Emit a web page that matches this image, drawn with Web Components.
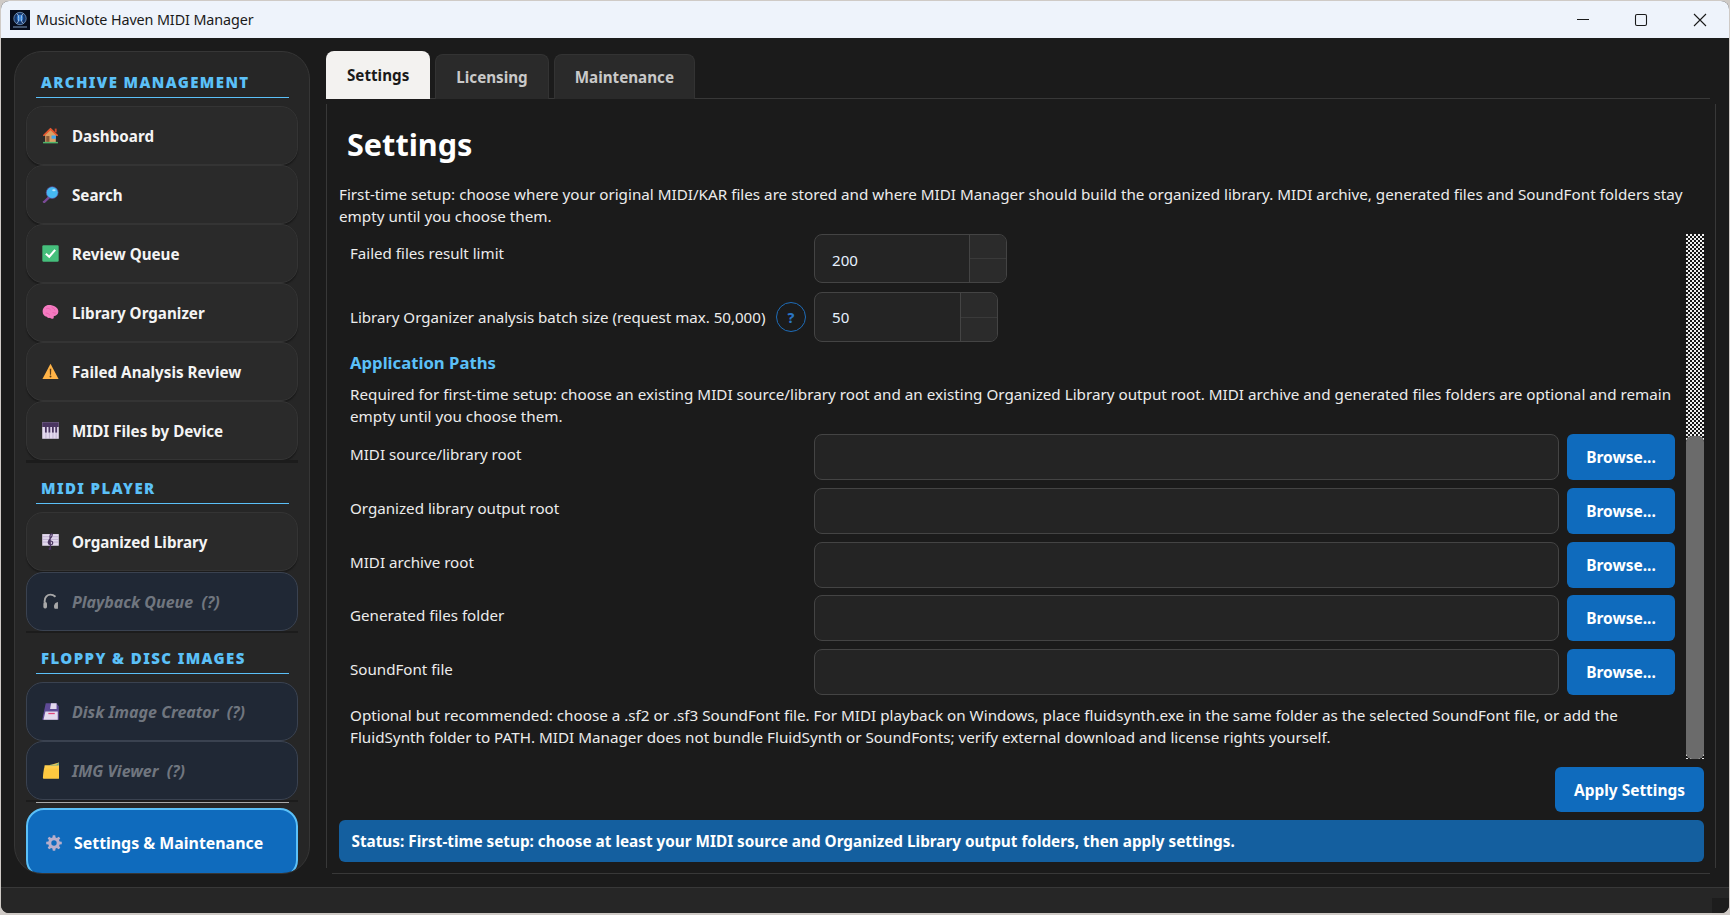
<!DOCTYPE html>
<html lang="en"><head><meta charset="utf-8"><title>MusicNote Haven MIDI Manager</title>
<style>
html,body{margin:0;height:100%;background:#cfcac6;overflow:hidden}
body{font-family:"Noto Sans","Open Sans",sans-serif;font-size:15px;color:#f0f0f0}
</style></head><body>
<app-window>
  <title-bar slot="top">MusicNote Haven MIDI Manager</title-bar>
  <side-nav slot="side">
    <nav-heading>ARCHIVE MANAGEMENT</nav-heading>
    <nav-button icon="house">Dashboard</nav-button>
    <nav-button icon="search">Search</nav-button>
    <nav-button icon="check">Review Queue</nav-button>
    <nav-button icon="brain">Library Organizer</nav-button>
    <nav-button icon="warn">Failed Analysis Review</nav-button>
    <nav-button icon="piano">MIDI Files by Device</nav-button>
    <nav-band></nav-band>
    <nav-heading>MIDI PLAYER</nav-heading>
    <nav-button icon="score">Organized Library</nav-button>
    <nav-button icon="phones" state="off">Playback Queue&nbsp; (?)</nav-button>
    <nav-band thin></nav-band>
    <nav-heading>FLOPPY &amp; DISC IMAGES</nav-heading>
    <nav-button icon="floppy" state="off">Disk Image Creator&nbsp; (?)</nav-button>
    <nav-button icon="folder" state="off">IMG Viewer&nbsp; (?)</nav-button>
    <nav-band rule></nav-band>
    <nav-button icon="gear" state="on">Settings &amp; Maintenance</nav-button>
  </side-nav>
  <main-pane slot="main">
    <tab-bar>
      <tab-item active>Settings</tab-item>
      <tab-item>Licensing</tab-item>
      <tab-item>Maintenance</tab-item>
    </tab-bar>
    <settings-page>
      <spin-row value="200" width="193">Failed files result limit</spin-row>
      <spin-row value="50" width="184" help>Library Organizer analysis batch size (request max. 50,000)</spin-row>
      <sub-heading>Application Paths</sub-heading>
      <note-text>Required for first-time setup: choose an existing MIDI source/library root and an existing Organized Library output root. MIDI archive and generated files folders are optional and remain empty until you choose them.</note-text>
      <path-row>MIDI source/library root</path-row>
      <path-row>Organized library output root</path-row>
      <path-row>MIDI archive root</path-row>
      <path-row>Generated files folder</path-row>
      <path-row>SoundFont file</path-row>
      <note-text tail>Optional but recommended: choose a .sf2 or .sf3 SoundFont file. For MIDI playback on Windows, place fluidsynth.exe in the same folder as the selected SoundFont file, or add the FluidSynth folder to PATH. MIDI Manager does not bundle FluidSynth or SoundFonts; verify external download and license rights yourself.</note-text>
    </settings-page>
  </main-pane>
</app-window>
<script>
const ICONS={
house:`<path d="M8 1 1 8h2v6h10V8h2z" fill="#d9a066"/><path d="M8 .8 .8 7.800l1 1L8 3l6.200 5.800 1-1z" fill="#e8552d"/><rect x="12" y="1.500" width="1.800" height="3.500" fill="#c9472a"/><rect x="4" y="8.500" width="3" height="5.500" fill="#8a5a3a"/><rect x="9" y="8" width="4" height="3" fill="#3fa7f0"/><rect x="1" y="14" width="14" height="1.400" fill="#4fb56b"/>`,
search:`<path d="M1.200 14.300 6 9.600l1.600 1.600-4.700 4.600c-.7.500-1.600.2-2-.3s-.2-1.200.3-1.700z" fill="#7a4a96"/><circle cx="9.600" cy="6.200" r="5.600" fill="#45b8f2"/><circle cx="9.600" cy="6.200" r="5.600" fill="none" stroke="#5e4a9a" stroke-width=".6"/><ellipse cx="11.200" cy="4" rx="1.600" ry="1" fill="#b6e6ff"/>`,
check:`<rect x=".3" y=".3" width="15.400" height="15.400" rx="1.200" fill="#45bf7c"/><path d="M3.600 8.200 6.800 11l5.600-6.400" fill="none" stroke="#fff" stroke-width="2"/>`,
brain:`<path d="M6.500 1C3.500 1 .6 3.300.6 7c0 2.500 1.600 4.500 3.900 5 .8 1.200 2 1.500 3 1 1 1.200 2.600 1.200 3.400.4.300-.7.200-1.400.1-1.900 2.300-.3 4.400-1.800 4.400-4.500C15.400 3.500 11 1 6.500 1z" fill="#f47ac0"/><path d="M4 4.500c2-1 3 0 4 1M9 3c1 1 3 1 3 3M3.500 8.500c2 0 3 1 4 2M10 8c1 0 2 1 3 .6" stroke="#e85aaa" fill="none" stroke-width=".8"/>`,
warn:`<path d="M8 .8.400 15h15.200z" fill="#ffb347"/><path d="M7.300 5.500h1.400l-.2 5.500h-1z" fill="#5a3c1a"/><circle cx="8" cy="12.700" r=".9" fill="#5a3c1a"/>`,
piano:`<rect x=".2" y=".2" width="15.600" height="15.600" fill="#e3d9ee"/><rect x=".2" y=".2" width="15.600" height="4.500" fill="#4a3560"/><g fill="#4a3560"><rect x="2.800" y="4" width="1.700" height="6"/><rect x="6.100" y="4" width="1.700" height="6"/><rect x="9.400" y="4" width="1.700" height="6"/><rect x="12.500" y="4" width="1.700" height="6"/></g><g stroke="#a595b8" stroke-width=".5"><path d="M3.700 10v6M7 10v6M10.300 10v6M13.300 10v6"/></g>`,
score:`<rect x=".2" y="1" width="15.600" height="11" fill="#e3d9ee"/><g stroke="#b9a9cc" stroke-width=".8"><path d="M.2 3.500h15.600M.2 6h15.600M.2 8.500h15.600"/></g><path d="M9 16c-2 .5-3-1.500-1.500-2M8 15 7.500 3c0-2 2-3 2.200-1.500S8 5 6.800 6.500 5.200 10.500 7.800 11 11 8 8.500 7.500 6.500 9.500 8 10" fill="none" stroke="#4a3560" stroke-width="1.100"/>`,
phones:`<path d="M2.500 9V7.500C2.500 4 5 1.500 8 1.500c2 0 3.500 1 4.700 2" fill="none" stroke="#a8a8a8" stroke-width="1.800"/><rect x="1.300" y="8.500" width="3.400" height="6" rx="1.500" fill="#a8a8a8"/><path d="M15 8.500c-2 .3-3 1.500-3.500 3s0 3.300.8 3.300h2.700z" fill="#a8a8a8"/>`,
floppy:`<path d="M3.500 .3h10L15.800 3v12.700H.2z" fill="#5e4a96"/><path d="M8.500.3h5.200v5.400H7.600z" fill="#e3d9ee"/><path d="M3.200 8h11.600v7.700H1.400z" fill="#e3d9ee"/><rect x="6" y="9.300" width="6" height="1.200" fill="#e0457a"/>`,
folder:`<path d="M2.500 3h4.500l9-2.500V15.500H1.200L.8 14.500z" fill="#ffcf4d"/><path d="M7.500 2.600h6L15.800.2v3h-8z" fill="#6aa88a"/><path d="M1.800 6h14v9.500h-14.600z" fill="#ffc940"/>`,
gear:`<path d="M6.800.2h2.400l.4 2.200 1.300.5L12.700 1.700 14.300 3.300 13 5.100l.6 1.300 2.200.4v2.400l-2.200.4-.5 1.300 1.200 1.800-1.600 1.600-1.900-1.200-1.200.5-.4 2.200H6.800l-.4-2.200-1.300-.5-1.800 1.200-1.600-1.600 1.200-1.800-.5-1.300-2.200-.4V6.800l2.200-.4.5-1.300L1.700 3.300 3.300 1.700l1.800 1.200 1.300-.5z" fill="#b7aecb"/><circle cx="8" cy="8" r="2.700" fill="#0f6bbd"/>`
};
function def(name,css,html){
  customElements.define(name,class extends HTMLElement{
    constructor(){super();this.attachShadow({mode:'open'})}
    connectedCallback(){
      const h=typeof html==='function'?html(this):html;
      this.shadowRoot.innerHTML=`<style>${css}</style>${h}`;
    }
  });
}
def('app-window',`
:host{display:flex;flex-direction:column;box-sizing:border-box;height:915px;width:1730px;padding:1px 1px 2px 1px}
.win{flex:1;display:flex;flex-direction:column;background:#1b1b1b;border-radius:8px;overflow:hidden;min-height:0}
.body{flex:1;display:flex;gap:16px;padding:13px;min-height:0;box-sizing:border-box}
.foot{height:25px;flex:none;background:#262626;border-top:1px solid #383838;display:flex;justify-content:flex-end;align-items:flex-end}
.grip{width:17px;height:15px;background:#1d1d1d}
`,`<div class="win"><slot name="top"></slot><div class="body"><slot name="side"></slot><slot name="main"></slot></div><div class="foot"><div class="grip"></div></div></div>`);
def('title-bar',`
:host{display:flex;flex:none;align-items:center;height:37px;background:#eef3fb;color:#1a1a1a;font:14.350px "Noto Sans",sans-serif;padding-left:9px}
.logo{width:20px;height:20px;margin-right:6px;flex:none}
.txt{flex:1;letter-spacing:-.1px}
.ctl{display:flex;height:100%}
.ctl div{width:58.500px;display:flex;align-items:center;justify-content:center}
.ctl svg{display:block}
`,`<svg class="logo" viewBox="0 0 20 20"><rect width="20" height="20" fill="#070d1c"/><circle cx="10" cy="8.500" r="6.200" fill="#16386e"/><circle cx="10" cy="8" r="3.200" fill="#2f7ad0"/><path d="M6.500 3.500c3 1 3 9 0 10M13.500 3.500c-3 1-3 9 0 10" stroke="#c4dcf5" stroke-width=".8" fill="none"/><circle cx="10" cy="8.500" r="6.200" fill="none" stroke="#7fa3cc" stroke-width=".7"/><rect x="3" y="16.500" width="14" height="1" fill="#7f9cc0"/></svg><div class="txt"><slot></slot></div>
<div class="ctl"><div><svg width="14" height="14" viewBox="0 0 14 14"><path d="M1 6.500h12" stroke="#1a1a1a" stroke-width="1.100"/></svg></div><div><svg width="14" height="14" viewBox="0 0 14 14"><rect x="1.500" y="1.500" width="11" height="11" rx="1.500" fill="none" stroke="#1a1a1a" stroke-width="1.100"/></svg></div><div><svg width="14" height="14" viewBox="0 0 14 14"><path d="M1 1l12 12M13 1 1 13" stroke="#1a1a1a" stroke-width="1.100"/></svg></div></div>`);
def('side-nav',`
:host{display:flex;flex-direction:column;flex:none;box-sizing:border-box;width:296px;background:#262626;border:1px solid #363636;border-radius:28px;overflow:hidden;padding:0 11px}
`,`<slot></slot>`);
def('nav-heading',`
:host{display:flex;align-items:flex-end;flex:none;box-sizing:border-box;height:41px;margin:0 9px 8px 10px;padding:0 0 5px 5px;border-bottom:1px solid #5bc0f8;color:#5bc0f8;font:900 15px "Noto Sans",sans-serif;letter-spacing:1.400px;line-height:20px}
:host(:first-child){height:46px}
`,`<slot></slot>`);
def('nav-band',`
:host{display:block;flex:none;height:3px;background:#1c1c1c;position:relative}
:host([thin]){height:2px}
:host([rule]){height:3px;margin-bottom:5px;background:linear-gradient(#1c1c1c 2px,transparent 2px)}
:host([rule])::after{content:"";display:block;position:absolute;left:10px;right:9px;bottom:0;height:1px;background:#a9a9a9}
`,``);
def('nav-button',`
:host{display:flex;align-items:center;flex:none;box-sizing:border-box;height:59px;padding-left:15px;background:#2a2a2a;border:1px solid #343434;border-radius:17px;color:#f4f4f4;font:700 15.200px "Noto Sans",sans-serif;box-shadow:0 2px 1px #1c1c1c;position:relative}
:host([icon=score]){margin-bottom:1px}
:host([state=off]){background:#202835;border-color:#3a4250;color:#70767f;font-style:italic;box-shadow:none;font-size:16px}
:host([state=on]){background:#0f6bbd;border:2px solid #5bc0f8;color:#fff;height:70px;padding-left:18px;border-radius:18px;box-shadow:none;font-size:15.900px}
svg{width:17px;height:17px;flex:none;margin-right:13px}
:host([state=on]) svg{width:16px;height:16px;margin-right:12px}
`,el=>`<svg viewBox="0 0 16 16">${ICONS[el.getAttribute('icon')]||''}</svg><span><slot></slot></span>`);
def('main-pane',`
:host{display:flex;flex-direction:column;flex:1;min-width:0}
`,`<slot></slot>`);
def('tab-bar',`
:host{display:flex;flex:none;align-items:flex-end;height:48px;gap:5px;position:relative;z-index:1}
`,`<slot></slot>`);
def('tab-item',`
:host{display:flex;align-items:center;box-sizing:border-box;height:45px;padding:0 20px;background:#2a2a2a;border:1px solid #333;border-bottom:none;border-radius:8px 8px 0 0;color:#c9c9c9;font:700 15.200px "Noto Sans",sans-serif}
:host([active]){height:48px;background:#f3f2f0;color:#1a1a1a;border:none;padding:0 21px}
`,`<slot></slot>`);
def('settings-page',`
:host{display:flex;flex-direction:column;flex:1;min-height:0;box-sizing:border-box;margin-top:-1px;padding:1px 12px 12px 13px;
background:
 linear-gradient(#383838,#383838) 0 6px/1px calc(100% - 12px) no-repeat,
 linear-gradient(#383838,#383838) 100% 6px/1px calc(100% - 12px) no-repeat,
 linear-gradient(#383838,#383838) 6px 0/calc(100% - 12px) 1px no-repeat,
 linear-gradient(#383838,#383838) 6px 100%/calc(100% - 12px) 1px no-repeat}
h1{margin:22px 0 16px 8px;font:700 30.600px/46px "Noto Sans",sans-serif;color:#fff}
.intro{margin:0 0 7px;font:15.220px/22px "Noto Sans",sans-serif;color:#ececec}
.scroll{display:flex;height:525px;flex:none}
.form{flex:1;min-width:0;padding:0 11px;display:flex;flex-direction:column}
.bar{width:18px;flex:none;background:repeating-conic-gradient(#151515 0 25%,#eeeeee 0 50%) 0 0/4px 4px;display:flex;flex-direction:column;justify-content:flex-end}
.thumb{height:323px;background:#6b6b6b;border-radius:6px}
.apply{align-self:flex-end;margin-top:8px;width:149px;height:45px;border:none;border-radius:6px;background:#0f6bbd;color:#fff;font:700 15.450px "Noto Sans",sans-serif;padding:0}
.status{margin-top:7.500px;height:42.500px;flex:none;box-sizing:border-box;display:flex;align-items:center;padding-left:12.500px;border-radius:6px;background:#145f9f;color:#fff;font:700 15.300px "Noto Sans",sans-serif}
`,`<h1>Settings</h1>
<p class="intro">First-time setup: choose where your original MIDI/KAR files are stored and where MIDI Manager should build the organized library. MIDI archive, generated files and SoundFont folders stay empty until you choose them.</p>
<div class="scroll"><div class="form"><slot></slot></div><div class="bar"><div class="thumb"></div></div></div>
<button class="apply">Apply Settings</button>
<div class="status">Status: First-time setup: choose at least your MIDI source and Organized Library output folders, then apply settings.</div>`);
def('spin-row',`
:host{display:flex;flex:none;align-items:center;height:49px;margin-bottom:9px;font:15.100px "Noto Sans",sans-serif;color:#ececec}
:host([help]){height:50px;margin-bottom:0}
.lab{width:426px;flex:none}
:host(:not([help])) .lab{padding-bottom:12px}
.help{width:30px;flex:none;display:flex;justify-content:center}
.help span{box-sizing:border-box;width:30px;height:30px;border:1.500px solid #1e6cb8;border-radius:50%;display:flex;align-items:center;justify-content:center;color:#2a75c4;font-weight:800;font-size:14px}
.box{box-sizing:border-box;height:100%;margin-left:8px;display:flex;background:#242424;border:1px solid #444;border-radius:8px;overflow:hidden;color:#e6f1ff}
.val{flex:1;padding:0 0 0 17px;display:flex;align-items:center}
:host(:not([help])) .val{padding-top:2px}
.sp{width:36px;border-left:1px solid #444;display:flex;flex-direction:column}
.sp i{flex:1;background:#2b2b2b}.sp i+i{border-top:1px solid #3a3a3a}
`,el=>`<div class="lab"><slot></slot></div><div class="help">${el.hasAttribute('help')?'<span>?</span>':''}</div><div class="box" style="width:${el.getAttribute('width')}px"><div class="val">${el.getAttribute('value')}</div><div class="sp"><i></i><i></i></div></div>`);
def('sub-heading',`
:host{display:block;flex:none;height:26px;margin:8px 0 7px;font:700 16.700px/26px "Noto Sans",sans-serif;color:#5bc0f8}
`,`<slot></slot>`);
def('note-text',`
:host{display:block;flex:none;height:44px;margin-bottom:7px;font:15.220px/22px "Noto Sans",sans-serif;color:#ececec}
:host([tail]){margin:1px 0 0}
`,`<slot></slot>`);
def('path-row',`
:host{display:flex;flex:none;height:46px;margin-bottom:7.750px;font:15.150px "Noto Sans",sans-serif;color:#ececec}
.lab{width:464px;flex:none;padding-top:9px;line-height:22px;box-sizing:border-box}
.in{flex:1;box-sizing:border-box;background:#242424;border:1px solid #444;border-radius:8px}
button{width:108px;margin-left:8px;flex:none;border:none;border-radius:6px;background:#0f6bbd;color:#fff;font:700 15.500px "Noto Sans",sans-serif;padding:0}
`,`<div class="lab"><slot></slot></div><div class="in"></div><button>Browse...</button>`);
</script>
</body></html>
